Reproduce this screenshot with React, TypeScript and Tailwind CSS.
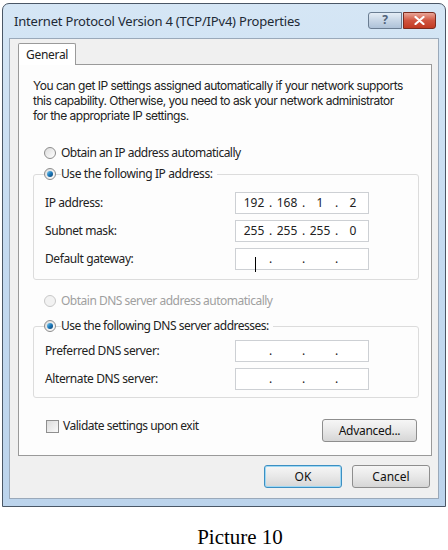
import React from 'react';

const font = { fontFamily: '"Noto Sans", "Liberation Sans", sans-serif' };

const Radio = ({ checked, disabled }: { checked?: boolean; disabled?: boolean }) => (
  <span
    className={`w-[12px] h-[12px] rounded-full border flex items-center justify-center shrink-0 ${
      disabled ? 'border-[#c8c8c8] bg-[#f2f2f2]' : 'border-[#8c8c8c] bg-gradient-to-br from-[#dcdcdc] to-[#ffffff]'
    }`}
  >
    {checked && <span className="w-[6px] h-[6px] rounded-full bg-gradient-to-br from-[#7fd0f0] via-[#1d7bbd] to-[#0b3f6e]" />}
  </span>
);

const IpField = ({ parts, caret }: { parts: string[]; caret?: boolean }) => (
  <div className="w-[134px] h-[22px] bg-white border border-[#cdd0d4] flex items-center pl-[3px] text-[12px] text-[#222]">
    {parts.map((p, i) => (
      <React.Fragment key={i}>
        <span className="w-[30px] text-center relative">
          {caret && i === 0 ? <span className="absolute left-[16px] top-[-2px] w-[1px] h-[15px] bg-black" /> : null}
          {p}
        </span>
        {i < 3 && <span className="w-[3px] text-center">.</span>}
      </React.Fragment>
    ))}
  </div>
);

const FieldRow = ({ label, parts, caret }: { label: string; parts: string[]; caret?: boolean }) => (
  <div className="flex items-center h-[28px]">
    <span className="w-[201px] pl-[11px] tracking-[-0.4px]">{label}</span>
    <IpField parts={parts} caret={caret} />
  </div>
);

const Button = ({ children, focused, className = '' }: { children: React.ReactNode; focused?: boolean; className?: string }) => (
  <div
    className={`h-[23px] flex items-center justify-center rounded-[3px] border text-[12px] text-[#111] bg-gradient-to-b from-[#f6f6f6] via-[#e8e8e8] to-[#d6d6d6] ${
      focused ? 'border-[#3c8fc2] shadow-[inset_0_0_0_1px_#9ed8f4]' : 'border-[#8e8e8e]'
    } ${className}`}
  >
    {children}
  </div>
);

const intro = [
  'You can get IP settings assigned automatically if your network supports',
  'this capability. Otherwise, you need to ask your network administrator',
  'for the appropriate IP settings.',
];

export default function App() {
  return (
    <div className="w-[448px] h-[550px] bg-white relative overflow-hidden" style={font}>
      <div className="ml-[2px] mt-[3px] w-[444px] h-[504px] border border-[#4a5766] rounded-t-[7px] bg-gradient-to-b from-[#d5e6f5] via-[#c4daf0] to-[#bcd4ec] flex flex-col">
        {/* title bar */}
        <div className="h-[34px] flex items-center pl-[11px] pr-[9px]">
          <span className="text-[13px] text-[#1e2a36] tracking-[-0.2px] mt-[2px]">Internet Protocol Version 4 (TCP/IPv4) Properties</span>
          <div className="ml-auto flex mt-[-2px]">
            <div className="w-[34px] h-[17px] rounded-l-[3px] border border-[#6a7d92] bg-gradient-to-b from-[#e4edf6] via-[#c7d6e6] to-[#aec2d8] flex items-center justify-center text-[12px] font-bold text-[#50627a] leading-none">
              ?
            </div>
            <div className="w-[33px] h-[17px] ml-[1px] rounded-r-[3px] border border-[#7a2b1e] bg-gradient-to-b from-[#e8a598] via-[#d0543f] to-[#c23a22] flex items-center justify-center">
              <svg width="11" height="9" viewBox="0 0 11 9">
                <path d="M1.5 1 L9.5 8 M9.5 1 L1.5 8" stroke="#fff" strokeWidth="2.2" strokeLinecap="round" />
              </svg>
            </div>
          </div>
        </div>
        {/* client */}
        <div className="mx-[6px] h-[461px] bg-[#f0f0f0] border border-[#9aa9ba] pt-[4px] px-[8px]">
          <div className="flex">
            <div className="h-[22px] px-[7px] border border-b-0 border-[#9a9a9a] bg-white text-[12px] text-[#222] flex items-center rounded-t-[2px] tracking-[-0.3px]">
              General
            </div>
          </div>
          <div className="w-[414px] h-[392px] border border-[#9a9a9a] mt-[-1px] bg-[#fdfdfd] text-[12px] text-[#222] px-[14px] pt-[13px]">
            <div className="tracking-[-0.5px] whitespace-nowrap font-['Inter',sans-serif]">
              {intro.map((line) => (
                <div key={line} className="h-[15px] leading-[15px]">
                  {line}
                </div>
              ))}
            </div>
            <div className="mt-[22px] flex items-center gap-[5px] pl-[11px] h-[16px] tracking-[-0.5px]">
              <Radio />
              <span>Obtain an IP address automatically</span>
            </div>
            <div className="mt-[5px] relative">
              <div className="flex items-center gap-[5px] pl-[11px] h-[16px] relative z-10 tracking-[-0.4px]">
                <Radio checked />
                <span className="bg-[#fdfdfd] pr-[4px]">Use the following IP address:</span>
              </div>
              <div className="mt-[-8px] w-[386px] h-[106px] border border-[#dcdcdc] rounded-[3px] pt-[14px]">
                <FieldRow label="IP address:" parts={['192', '168', '1', '2']} />
                <FieldRow label="Subnet mask:" parts={['255', '255', '255', '0']} />
                <FieldRow label="Default gateway:" parts={['', '', '', '']} caret />
              </div>
            </div>
            <div className="mt-[13px] flex items-center gap-[5px] pl-[11px] h-[16px] text-[#a0a0a0] tracking-[-0.5px]">
              <Radio disabled />
              <span>Obtain DNS server address automatically</span>
            </div>
            <div className="mt-[9px] relative">
              <div className="flex items-center gap-[5px] pl-[11px] h-[16px] relative z-10 tracking-[-0.5px]">
                <Radio checked />
                <span className="bg-[#fdfdfd] pr-[4px]">Use the following DNS server addresses:</span>
              </div>
              <div className="mt-[-8px] w-[386px] h-[72px] border border-[#dcdcdc] rounded-[3px] pt-[10px]">
                <FieldRow label="Preferred DNS server:" parts={['', '', '', '']} />
                <FieldRow label="Alternate DNS server:" parts={['', '', '', '']} />
              </div>
            </div>
            <div className="mt-[19px] flex items-start">
              <div className="flex items-center gap-[4px] pl-[13px] tracking-[-0.5px]">
                <span className="w-[13px] h-[13px] border border-[#8f8f8f] bg-gradient-to-br from-[#dcdcdc] to-[#fafafa]" />
                <span>Validate settings upon exit</span>
              </div>
              <Button className="ml-auto w-[95px] mt-[2px] tracking-[-0.3px]">Advanced...</Button>
            </div>
          </div>
          <div className="flex justify-end gap-[10px] mt-[9px]">
            <Button focused className="w-[78px]">OK</Button>
            <Button className="w-[78px]">Cancel</Button>
          </div>
        </div>
      </div>
      <div className="mt-[15px] pl-[32px] text-center text-[21px] text-black" style={{ fontFamily: '"Liberation Serif", serif' }}>
        Picture 10
      </div>
    </div>
  );
}
